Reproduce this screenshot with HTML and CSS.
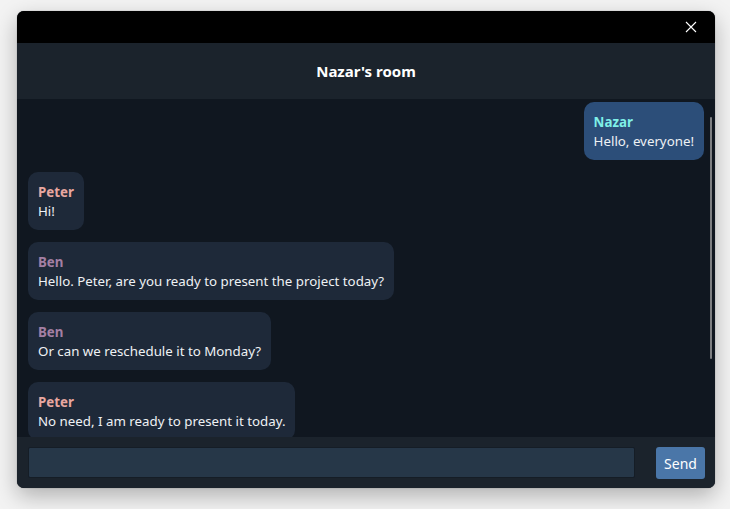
FILE: index.html
```html
<!DOCTYPE html>
<html>
<head>
<meta charset="utf-8">
<link rel="stylesheet" href="styles.css">
</head>
<body>
<div class="window">
  <div class="titlebar">
    <svg class="close" width="12" height="12" viewBox="0 0 12 12"><path d="M1 1L11 11M11 1L1 11" stroke="#fff" stroke-width="1.1" fill="none"/></svg>
  </div>
  <div class="header">Nazar's room</div>
  <div class="chat">
    <div class="msg mine"><div class="name nazar">Nazar</div><div class="text">Hello, everyone!</div></div>
    <div class="msg"><div class="name peter">Peter</div><div class="text">Hi!</div></div>
    <div class="msg"><div class="name ben">Ben</div><div class="text">Hello. Peter, are you ready to present the project today?</div></div>
    <div class="msg"><div class="name ben">Ben</div><div class="text">Or can we reschedule it to Monday?</div></div>
    <div class="msg"><div class="name peter">Peter</div><div class="text">No need, I am ready to present it today.</div></div>
    <div class="scrollbar"></div>
  </div>
  <div class="footer">
    <div class="input"></div>
    <button class="send">Send</button>
  </div>
</div>
</body>
</html>
```
FILE: styles.css
```css
html, body { margin: 0; padding: 0; }
body {
  background: #f3f3f3;
  width: 730px;
  height: 509px;
  overflow: hidden;
  font-family: "Noto Sans", "Open Sans", sans-serif;
}
.window {
  margin: 11px 0 0 17px;
  width: 698px;
  height: 477px;
  border-radius: 7px;
  overflow: hidden;
  display: flex;
  flex-direction: column;
  box-shadow: 0 8px 22px rgba(0,0,0,0.28), 0 0 1px rgba(0,0,0,0.5);
  background: #101720;
}
.titlebar {
  height: 32px;
  background: #000;
  display: flex;
  justify-content: flex-end;
  align-items: center;
  padding-right: 18px;
  flex: none;
}
.header {
  height: 56px;
  flex: none;
  background: #1b232c;
  color: #fff;
  font-weight: 700;
  font-size: 15px;
  display: flex;
  align-items: center;
  justify-content: center;
}
.chat {
  flex: 1;
  position: relative;
  overflow: hidden;
  padding: 3px 11px 0;
  display: flex;
  flex-direction: column;
  align-items: flex-start;
  gap: 12px;
}
.msg {
  background: #1e2939;
  border-radius: 10px;
  padding: 11px 10px 9px;
  font-size: 13.3px;
  line-height: 19px;
  color: #eef1f4;
}
.msg.mine {
  align-self: flex-end;
  background: #2c4e79;
}
.name { font-weight: 700; }
.nazar { color: #7ff0e8; }
.peter { color: #e8a7a0; }
.ben { color: #a37fa3; }
.scrollbar {
  position: absolute;
  right: 3px;
  top: 18px;
  width: 2px;
  height: 242px;
  background: #7d7f82;
  border-radius: 1px;
}
.footer {
  height: 51px;
  flex: none;
  box-sizing: border-box;
  background: #1b232c;
  display: flex;
  align-items: flex-start;
  padding: 10px 10px 0 11px;
  gap: 21px;
}
.input {
  flex: 1;
  height: 31px;
  box-sizing: border-box;
  background: #263748;
  border: 1px solid #151d26;
  border-radius: 2px;
}
.send {
  width: 49px;
  height: 32px;
  border: none;
  border-radius: 3px;
  background: #4a76a8;
  color: #fff;
  font-family: inherit;
  font-size: 14px;
  padding: 0;
}
```
